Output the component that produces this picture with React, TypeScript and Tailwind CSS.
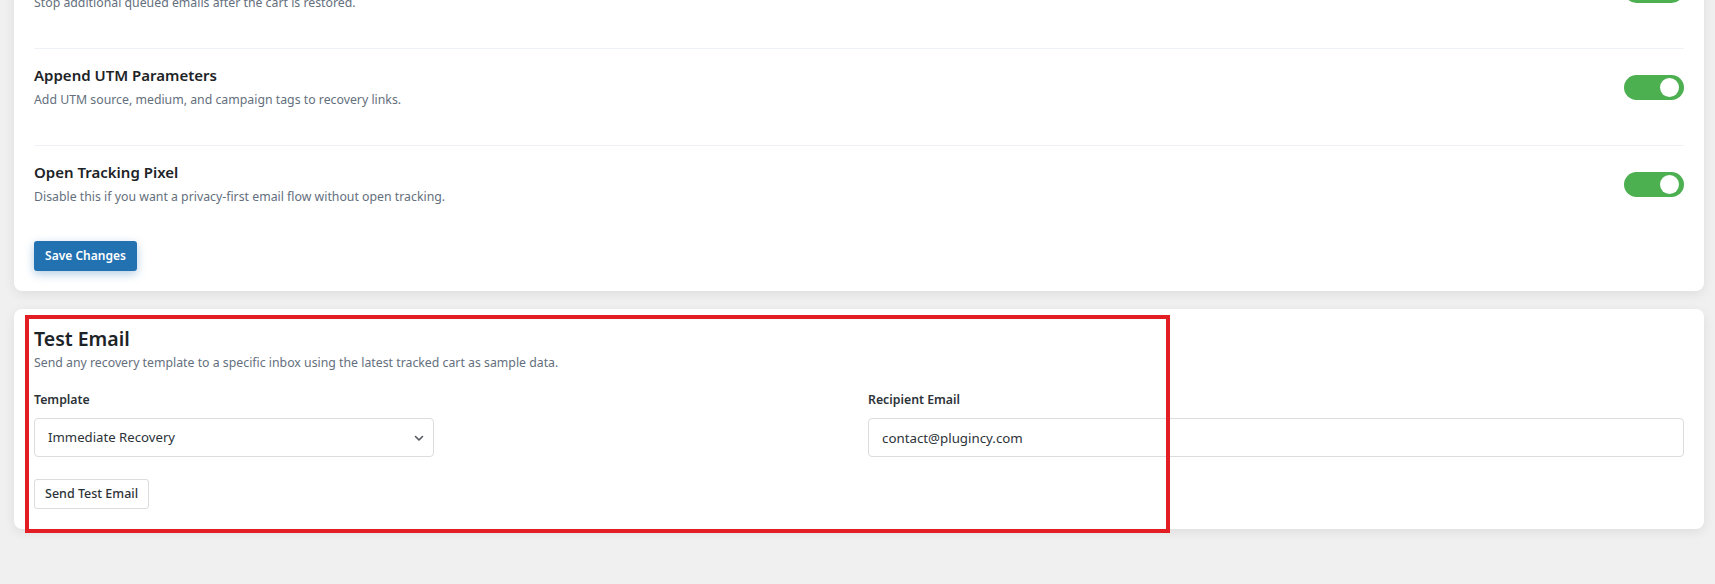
import React from 'react';

const font = { fontFamily: '"Noto Sans", "Open Sans", Arial, sans-serif' };

const settings = [
  {
    title: 'Stop Sequence on Recovery',
    description: 'Stop additional queued emails after the cart is restored.',
    enabled: true,
  },
  {
    title: 'Append UTM Parameters',
    description: 'Add UTM source, medium, and campaign tags to recovery links.',
    enabled: true,
  },
  {
    title: 'Open Tracking Pixel',
    description: 'Disable this if you want a privacy-first email flow without open tracking.',
    enabled: true,
  },
];

const Toggle = ({ on }: { on: boolean }) => (
  <button
    type="button"
    role="switch"
    aria-checked={on}
    className={
      on
        ? 'flex h-[25px] w-[60px] shrink-0 items-center justify-end rounded-full bg-[#4caf50] pr-[5px]'
        : 'flex h-[25px] w-[60px] shrink-0 items-center justify-start rounded-full bg-[#c3c4c7] pl-[5px]'
    }
  >
    <span className="h-[19px] w-[19px] rounded-full bg-white" />
  </button>
);

const App = () => {
  return (
    <div className="min-h-screen overflow-hidden bg-[#f0f0f1] pl-[14px] pr-[11px]" style={font}>
      {/* General settings card, scrolled so only the lower rows show */}
      <div className="-mt-[68px] rounded-lg bg-white px-5 pt-5 pb-5 shadow-[0_3px_12px_rgba(0,0,0,0.08)]">
        {settings.map((item, i) => (
          <div
            key={item.title}
            className={
              i < settings.length - 1
                ? 'flex items-center justify-between border-b border-[#eef1f5] pt-[15px] pb-[35px]'
                : 'flex items-center justify-between pt-[15px] pb-[34px]'
            }
          >
            <div>
              <h3 className="text-[15px] font-semibold leading-[22px] text-[#1d2327]">{item.title}</h3>
              <p className="mt-[4px] text-[12.3px] leading-[20px] text-[#646f7d]">{item.description}</p>
            </div>
            <Toggle on={item.enabled} />
          </div>
        ))}
        <button
          type="button"
          className="h-[30px] w-[103px] rounded-[3px] bg-[#2271b1] text-[12px] font-semibold text-white shadow-[0_3px_10px_rgba(34,113,177,0.35)]"
        >
          Save Changes
        </button>
      </div>

      {/* Test email card */}
      <div className="relative mt-[18px] rounded-lg bg-white px-5 pt-4 pb-5 shadow-[0_3px_12px_rgba(0,0,0,0.08)]">
        <h2 className="text-[19.5px] font-semibold leading-[28px] text-[#1d2327]">Test Email</h2>
        <p className="text-[12.3px] leading-[20px] text-[#646f7d]">
          Send any recovery template to a specific inbox using the latest tracked cart as sample data.
        </p>

        <div className="mt-[17px] grid grid-cols-2 gap-[18px]">
          <div>
            <label className="block text-[12.3px] font-semibold leading-[20px] text-[#2c3338]">Template</label>
            <div className="relative mt-2 w-[400px]">
              <select
                defaultValue="immediate"
                className="h-[39px] w-full appearance-none rounded-[4px] border border-[#dcdcde] bg-white pl-[13px] text-[13.2px] text-[#2c3338] outline-none"
                style={font}
              >
                <option value="immediate">Immediate Recovery</option>
                <option value="reminder">Friendly Reminder</option>
                <option value="final">Final Offer</option>
              </select>
              <svg
                className="pointer-events-none absolute right-[9px] top-1/2 h-[12px] w-[12px] -translate-y-1/2"
                viewBox="0 0 12 12"
                fill="none"
                stroke="#50575e"
                strokeWidth="1.6"
                strokeLinecap="round"
                strokeLinejoin="round"
              >
                <path d="M2.5 4.5 6 8l3.5-3.5" />
              </svg>
            </div>
          </div>
          <div>
            <label className="block text-[12.3px] font-semibold leading-[20px] text-[#2c3338]">Recipient Email</label>
            <input
              type="email"
              defaultValue="contact@plugincy.com"
              className="mt-2 h-[39px] w-full rounded-[4px] border border-[#dcdcde] bg-white pl-[13px] text-[13.3px] text-[#2c3338] outline-none"
              style={font}
            />
          </div>
        </div>

        <button
          type="button"
          className="mt-[22px] h-[30px] rounded-[3px] border border-[#dcdcde] bg-white px-[10px] text-[12.5px] font-medium text-[#2c3338]"
        >
          Send Test Email
        </button>

        {/* highlight frame */}
        <div className="pointer-events-none absolute left-[11px] top-[6px] h-[218px] w-[1145px] border-4 border-[#e21d23]" />
      </div>
      <div className="h-[60px]" />
    </div>
  );
};

export default App;
